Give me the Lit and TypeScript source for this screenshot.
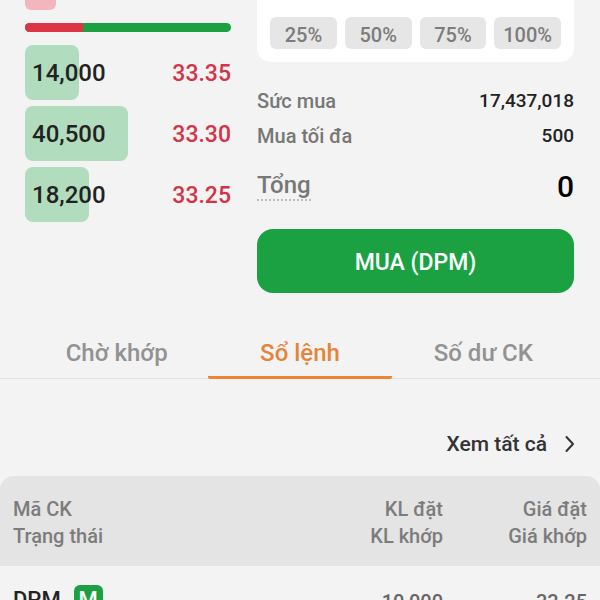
import { LitElement, html, css } from "lit";
import { customElement } from "lit/decorators.js";
import { styleMap } from "lit/directives/style-map.js";

const bids = [
  { volume: "14,000", price: "33.35", share: 26 },
  { volume: "40,500", price: "33.30", share: 50 },
  { volume: "18,200", price: "33.25", share: 31 },
];
const percents = ["25%", "50%", "75%", "100%"];
const tabs = ["Chờ khớp", "Sổ lệnh", "Số dư CK"];

@customElement("order-book")
class OrderBook extends LitElement {
  static styles = css`
    :host { display: block; }
    .ask { width: 15%; height: 10px; background: #f4b6be; border-radius: 0 0 6px 6px; }
    .ratio { display: flex; height: 9px; margin: 13px 0; border-radius: 5px; overflow: hidden; background: #1ba142; }
    .sell { background: #dc3545; }
    .list { display: grid; gap: 6px; margin: 0; padding: 0; list-style: none; }
    .row { display: grid; grid-template-columns: 100%; height: 55px; font-size: 24px; font-weight: 500; }
    .depth, .values { grid-area: 1 / 1; }
    .depth { background: #b1dcbd; border-radius: 8px; }
    .values { display: flex; align-items: center; justify-content: space-between; padding-left: 7px; padding-top: 1px; color: #222; }
    .price { color: #d33447; font-size: 23px; }
  `;
  render() {
    return html`
      <div class="ask"></div>
      <div class="ratio"><div class="sell" style=${styleMap({ width: "28%" })}></div></div>
      <ul class="list">
        ${bids.map((b) => html`
          <li class="row">
            <div class="depth" style=${styleMap({ width: `${b.share}%` })}></div>
            <div class="values"><span>${b.volume}</span><span class="price">${b.price}</span></div>
          </li>`)}
      </ul>`;
  }
}

@customElement("order-form")
class OrderForm extends LitElement {
  static styles = css`
    :host { display: block; }
    button { font: inherit; border: 0; padding: 0; }
    .card { display: grid; grid-template-columns: repeat(4, 1fr); gap: 8px; padding: 17px 13px 13px; background: #fff; border-radius: 0 0 14px 14px; }
    .percent { height: 32px; padding-top: 3px; border-radius: 6px; background: #e6e6e6; color: #7c7c7c; font-size: 20px; font-weight: 500; }
    .facts { margin: 21px 0 0; }
    .fact { display: flex; justify-content: space-between; align-items: center; height: 35px; font-size: 20px; font-weight: 500; color: #777; }
    .total { height: 40px; margin-top: 13px; font-size: 24px; }
    dd { margin: 0; font-size: 19px; color: #222; }
    .total dd { font-size: 30px; color: #000; }
    .hint { border-bottom: 2px dotted #bbb; }
    .buy { display: block; width: 100%; height: 64px; margin-top: 23px; padding-top: 2px; border-radius: 16px; background: #1ba142; color: #fff; font-size: 23px; font-weight: 500; }
  `;
  render() {
    return html`
      <div class="card">${percents.map((p) => html`<button class="percent">${p}</button>`)}</div>
      <dl class="facts">
        <div class="fact"><dt>Sức mua</dt><dd>17,437,018</dd></div>
        <div class="fact"><dt>Mua tối đa</dt><dd>500</dd></div>
        <div class="fact total"><dt class="hint">Tổng</dt><dd>0</dd></div>
      </dl>
      <button class="buy">MUA (DPM)</button>`;
  }
}

@customElement("app-root")
class AppRoot extends LitElement {
  static styles = css`
    :host { display: block; height: 100vh; overflow: hidden; background: #f3f3f3; font-family: Roboto, "Noto Sans", sans-serif; color: #333; }
    .trade { display: grid; grid-template-columns: minmax(0, 13fr) minmax(0, 20fr); gap: 26px; padding: 0 26px 0 25px; }
    .tabs { display: grid; grid-template-columns: repeat(3, 1fr); margin-top: 34px; padding: 0 25px; border-bottom: 1px solid #e2e2e2; }
    .tab { height: 52px; margin-bottom: -1px; padding: 2px 0 0; border: 0; border-bottom: 3px solid transparent; background: none; font: 500 24px/48px Roboto, "Noto Sans", sans-serif; color: #929292; }
    .tab[aria-selected="true"] { color: #e5853b; border-color: #ec8433; border-radius: 2px; }
    .more { display: flex; justify-content: flex-end; padding: 48px 25px 16px; }
    .link { display: flex; align-items: center; gap: 18px; height: 33px; font-size: 21px; font-weight: 500; color: #333; text-decoration: none; }
    .chevron { width: 10px; height: 18px; fill: none; stroke: #333; stroke-width: 2; stroke-linecap: round; stroke-linejoin: round; }
    .orders { width: 100%; border-collapse: separate; border-spacing: 0; table-layout: fixed; }
    .orders th { height: 86px; padding: 4px 13px 0; background: #e4e4e4; color: #7c7c7c; font-size: 20px; font-weight: 500; line-height: 27px; text-align: right; }
    .orders th:first-child { text-align: left; border-radius: 14px 0 0 0; }
    .orders th:last-child { border-radius: 0 14px 0 0; }
    .orders td { padding: 19px 13px; font-size: 20px; font-weight: 500; line-height: 34px; text-align: right; vertical-align: top; color: #666; }
    .orders td:first-child { text-align: left; }
    .symbol { display: flex; align-items: center; gap: 13px; font-size: 22px; line-height: 30px; color: #222; }
    .side { width: 29px; border-radius: 6px; background: #1ba142; color: #fff; text-align: center; }
    .wide { width: 39%; }
    .last { width: 24%; }
  `;
  render() {
    return html`
      <section class="trade"><order-book></order-book><order-form></order-form></section>
      <div class="tabs" role="tablist">
        ${tabs.map((t, i) => html`<button class="tab" role="tab" aria-selected=${i === 1 ? "true" : "false"}>${t}</button>`)}
      </div>
      <div class="more">
        <a class="link" href="#orders">Xem tất cả
          <svg class="chevron" viewBox="0 0 10 18" aria-hidden="true"><path d="M1.5 2 8 9 1.5 16" /></svg>
        </a>
      </div>
      <table class="orders" id="orders">
        <colgroup><col class="wide" /><col /><col class="last" /></colgroup>
        <thead>
          <tr><th>Mã CK<br />Trạng thái</th><th>KL đặt<br />KL khớp</th><th>Giá đặt<br />Giá khớp</th></tr>
        </thead>
        <tbody>
          <tr>
            <td><div class="symbol"><span>DPM</span><span class="side">M</span></div></td>
            <td>10,000</td>
            <td>33.25</td>
          </tr>
        </tbody>
      </table>`;
  }
}
